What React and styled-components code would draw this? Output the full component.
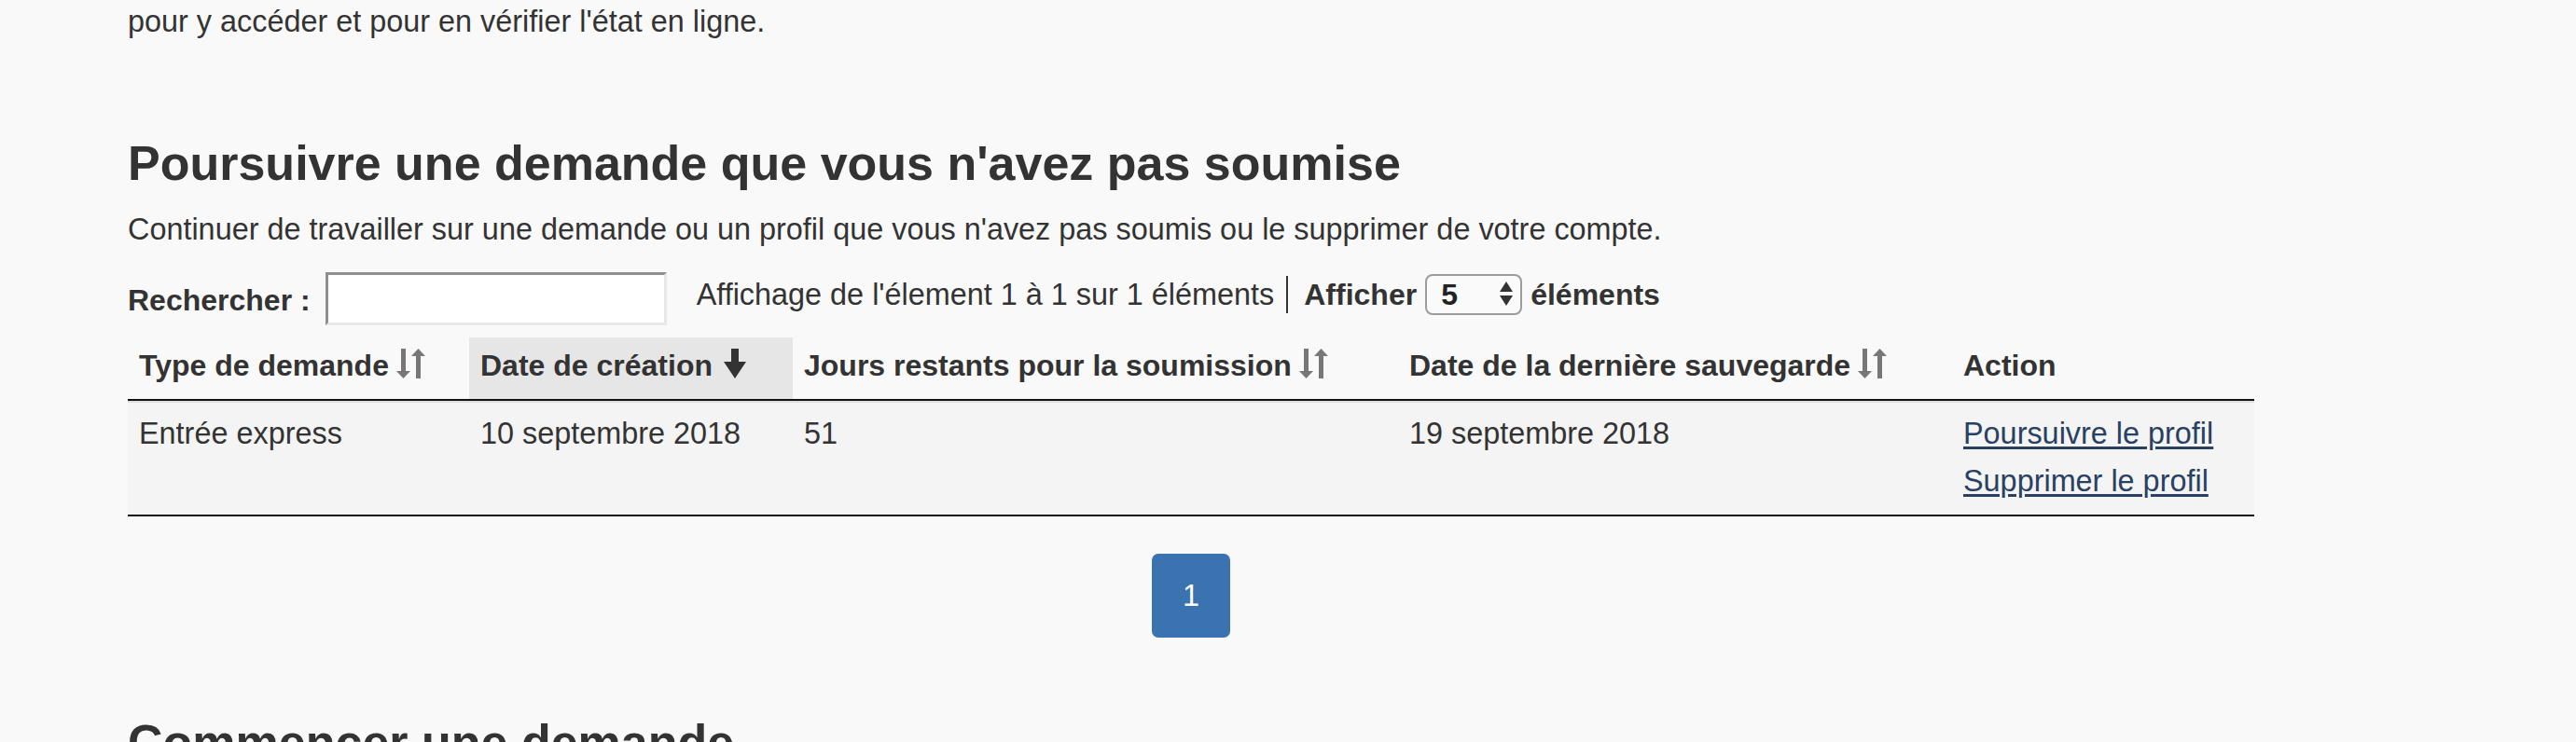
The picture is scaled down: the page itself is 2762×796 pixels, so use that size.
import React from "react"
import styled, { createGlobalStyle } from "styled-components"

const GlobalStyle = createGlobalStyle`
  html, body {
    margin: 0;
    padding: 0;
    background: #f9f9f9;
  }
  body {
    font-family: "Liberation Sans", Arial, Helvetica, sans-serif;
    font-size: 32.4px;
    line-height: 46px;
    color: #333;
  }
`

const Page = styled.main`
  padding-left: 137px;
  width: 2280px;
`
const Lead = styled.p`
  margin: 0;
`
const Heading = styled.h2`
  margin: ${({ $top }) => $top}px 0 0;
  font-size: 52px;
  line-height: 57px;
  font-weight: bold;
  color: #333;
`
const Intro = styled.p`
  margin: 19px 0 0;
`
const Controls = styled.div`
  display: flex;
  align-items: flex-start;
  margin-top: 23px;
  height: 57px;
`
const SearchLabel = styled.label`
  display: flex;
  align-items: flex-start;
  font-size: 32px;
  font-weight: bold;
  span {
    margin-top: 7px;
  }
`
const SearchInput = styled.input`
  box-sizing: border-box;
  width: 366px;
  height: 57px;
  margin-left: 16px;
  background: #fff;
  border: 3px solid;
  border-color: #8f8f8f #e8e8e8 #e8e8e8 #8f8f8f;
  font: inherit;
`
const Info = styled.div`
  display: flex;
  align-items: center;
  margin: 1px 0 0 32px;
`
const Count = styled.span`
  padding-right: 13px;
  border-right: 2px solid #333;
  line-height: 40px;
`
const Show = styled.span`
  display: flex;
  align-items: center;
  gap: 9px;
  padding-left: 17px;
  font-size: 32px;
  font-weight: bold;
`
const SelectWrap = styled.span`
  position: relative;
  display: inline-block;
  svg {
    position: absolute;
    top: 9px;
    right: 10px;
    pointer-events: none;
  }
`
const Select = styled.select`
  appearance: none;
  box-sizing: border-box;
  width: 104px;
  height: 44px;
  padding: 0 0 0 15px;
  border: 2px solid #9c9c9c;
  border-radius: 8px;
  background: #fafafa;
  color: #222;
  font: inherit;
  font-weight: bold;
  line-height: 40px;
`
const Table = styled.table`
  width: 2280px;
  margin-top: 13px;
  border-collapse: separate;
  border-spacing: 0;
  table-layout: fixed;
`
const Th = styled.th`
  padding: 7px 12px 13px;
  border-bottom: 2px solid #111;
  background: ${({ $active }) => ($active ? "#e6e6e6" : "transparent")};
  text-align: left;
  font-size: 32px;
  font-weight: bold;
  white-space: nowrap;
  svg {
    margin-left: ${({ $active }) => ($active ? 12 : 8)}px;
    vertical-align: -3px;
  }
`
const Td = styled.td`
  padding: 10px 12px 13px;
  border-top: 2px solid #dcdcdc;
  border-bottom: 2px solid #111;
  background: #f4f4f4;
  vertical-align: top;
`
const ActionLink = styled.a`
  display: block;
  color: #284162;
  text-decoration: underline;
  text-underline-offset: 3px;
  & + & {
    margin-top: 5px;
  }
`
const Pager = styled.nav`
  display: flex;
  justify-content: center;
  margin-top: 40px;
`
const PageButton = styled.span`
  display: flex;
  align-items: center;
  justify-content: center;
  width: 84px;
  height: 90px;
  border-radius: 7px;
  background: #3b72b0;
  color: #fff;
`

const SortIcon = () => (
  <svg width="31" height="32" viewBox="0 0 31 32" fill="#777">
    <rect x="5" y="0" width="5" height="24" />
    <polygon points="0,24 15,24 7.5,32" />
    <polygon points="16,8 31,8 23.5,0" />
    <rect x="21" y="8" width="5" height="24" />
  </svg>
)

const SortDownIcon = () => (
  <svg width="24" height="32" viewBox="0 0 24 32" fill="#333">
    <rect x="8" y="0" width="8" height="16" />
    <polygon points="0,14 24,14 12,32" />
  </svg>
)

const SelectArrows = () => (
  <svg width="14" height="26" viewBox="0 0 14 26" fill="#333">
    <polygon points="7,0 14,11 0,11" />
    <polygon points="0,15 14,15 7,26" />
  </svg>
)

const columns = [
  { label: "Type de demande", width: 366, sort: "both" },
  { label: "Date de création", width: 347, sort: "down" },
  { label: "Jours restants pour la soumission", width: 649, sort: "both" },
  { label: "Date de la dernière sauvegarde", width: 594, sort: "both" },
  { label: "Action", width: 324 },
]

const rows = [
  {
    type: "Entrée express",
    created: "10 septembre 2018",
    days: "51",
    saved: "19 septembre 2018",
  },
]

const App = () => {
  return (
    <>
      <GlobalStyle />
      <Page>
        <Lead>pour y accéder et pour en vérifier l'état en ligne.</Lead>

        <Heading $top={101}>Poursuivre une demande que vous n'avez pas soumise</Heading>
        <Intro>
          Continuer de travailler sur une demande ou un profil que vous n'avez pas soumis ou le
          supprimer de votre compte.
        </Intro>

        <Controls>
          <SearchLabel>
            <span>Rechercher :</span>
            <SearchInput type="search" />
          </SearchLabel>
          <Info>
            <Count>Affichage de l'élement 1 à 1 sur 1 éléments</Count>
            <Show>
              Afficher
              <SelectWrap>
                <Select defaultValue="5">
                  <option value="5">5</option>
                  <option value="10">10</option>
                  <option value="25">25</option>
                </Select>
                <SelectArrows />
              </SelectWrap>
              éléments
            </Show>
          </Info>
        </Controls>

        <Table>
          <colgroup>
            {columns.map(col => (
              <col key={col.label} style={{ width: col.width }} />
            ))}
          </colgroup>
          <thead>
            <tr>
              {columns.map(col => (
                <Th key={col.label} $active={col.sort === "down"}>
                  {col.label}
                  {col.sort === "both" && <SortIcon />}
                  {col.sort === "down" && <SortDownIcon />}
                </Th>
              ))}
            </tr>
          </thead>
          <tbody>
            {rows.map(row => (
              <tr key={row.type}>
                <Td>{row.type}</Td>
                <Td>{row.created}</Td>
                <Td>{row.days}</Td>
                <Td>{row.saved}</Td>
                <Td>
                  <ActionLink href="#">Poursuivre le profil</ActionLink>
                  <ActionLink href="#">Supprimer le profil</ActionLink>
                </Td>
              </tr>
            ))}
          </tbody>
        </Table>

        <Pager>
          <PageButton>1</PageButton>
        </Pager>

        <Heading $top={84}>Commencer une demande</Heading>
      </Page>
    </>
  )
}

export default App
